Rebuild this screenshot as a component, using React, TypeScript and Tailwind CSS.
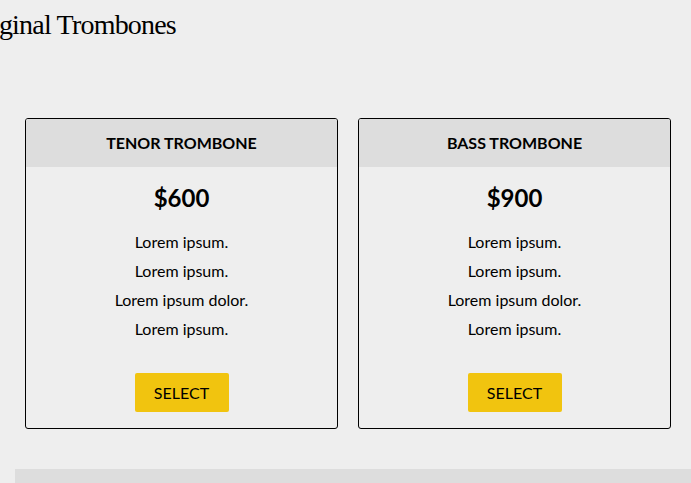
const plans = [
  { name: 'Tenor Trombone', price: '$600' },
  { name: 'Bass Trombone', price: '$900' },
]

const features = ['Lorem ipsum.', 'Lorem ipsum.', 'Lorem ipsum dolor.', 'Lorem ipsum.']

export default function App() {
  return (
    <div className="min-h-[483px] bg-[#eeeeee] overflow-hidden font-['Lato',sans-serif] text-black">
      <h1 className="ml-[-36px] pt-[7px] font-['Liberation_Serif',serif] text-[28px] leading-[36px] tracking-[-0.8px] whitespace-nowrap">
        Original Trombones
      </h1>

      <div className="grid grid-cols-2 gap-5 pl-[25px] pr-[20px] mt-[75px]">
        {plans.map((plan) => (
          <div key={plan.name} className="border border-black rounded-[3px] overflow-hidden">
            <div className="h-[48px] bg-[#dddddd] flex items-center justify-center">
              <h2 className="text-[16px] font-bold uppercase">{plan.name}</h2>
            </div>
            <div className="flex flex-col items-center pt-[14px] pb-[16px]">
              <p className="text-[24px] font-bold leading-[34px]">{plan.price}</p>
              <ul className="mt-[17px] flex flex-col gap-[10px] text-[16px] leading-[19px]">
                {features.map((f, i) => (
                  <li key={i} className="text-center">{f}</li>
                ))}
              </ul>
              <button className="mt-[35px] w-[94px] h-[39px] bg-[#f1c40f] rounded-[2px] text-[16px] uppercase">
                Select
              </button>
            </div>
          </div>
        ))}
      </div>

      <div className="ml-[15px] mt-[40px] h-[20px] bg-[#dddddd]" />
    </div>
  )
}
